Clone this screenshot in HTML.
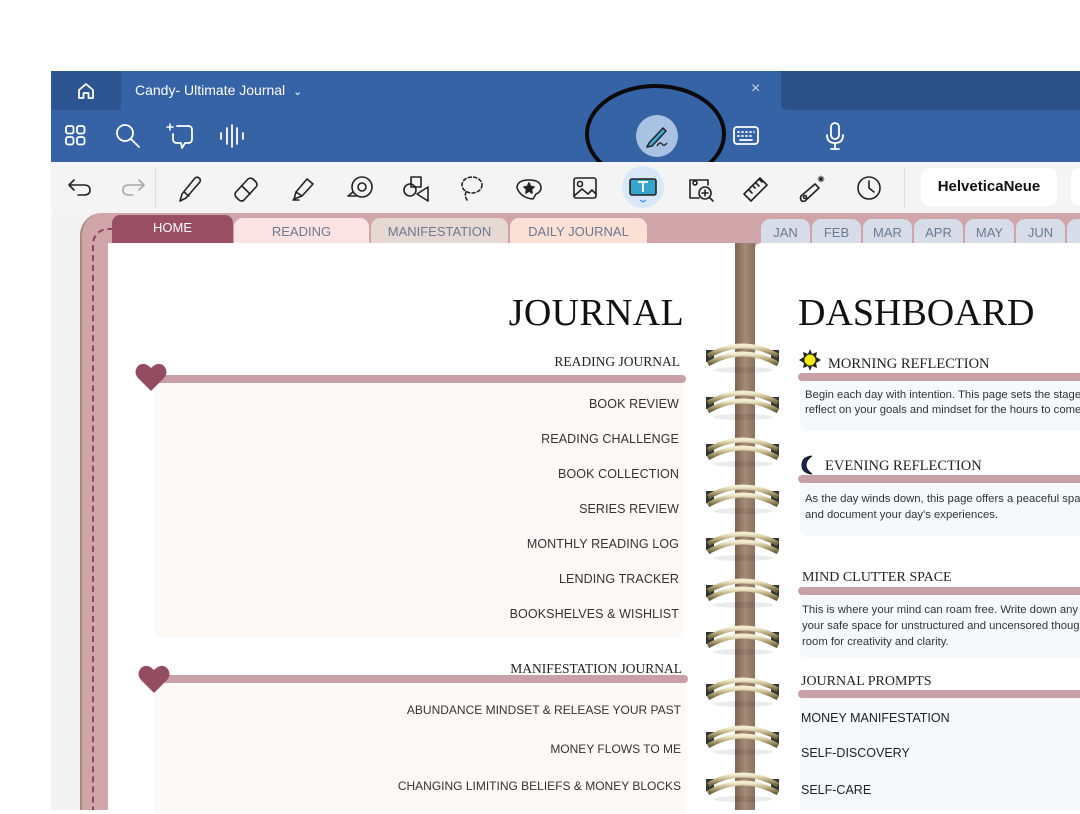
<!DOCTYPE html>
<html><head><meta charset="utf-8"><style>
*{margin:0;padding:0;box-sizing:border-box}
body{width:1080px;height:810px;overflow:hidden;background:#fff;position:relative;font-family:"Liberation Sans",sans-serif}
.a{position:absolute}
.ser{font-family:"Liberation Serif",serif}
.r{right:0;text-align:right;color:#333;font-size:12.5px;letter-spacing:.1px}
.r2{right:0;text-align:right;color:#333;font-size:12px;letter-spacing:0}
.ic{stroke:#222;fill:none;stroke-width:1.6;stroke-linecap:round;stroke-linejoin:round}
.wi{stroke:#fff;fill:none;stroke-width:1.8;stroke-linecap:round;stroke-linejoin:round}
.mt{top:219px;width:49px;height:26px;background:#d6dde9;border-radius:9px 9px 0 0;color:#6e7891;font-size:13px;text-align:center;line-height:28px}
</style></head><body>
<div class="a" style="left:51px;top:71px;width:1029px;height:91px;background:#3563a5"></div>
<div class="a" style="left:51px;top:71px;width:70px;height:39px;background:#2c5592"></div>
<div class="a" style="left:781px;top:71px;width:299px;height:39px;background:#2c5088;border-radius:0 0 0 6px"></div>
<svg class="a" style="left:76px;top:81px" width="20" height="20" viewBox="0 0 20 20"><path class="wi" d="M3 9 L10 3 L17 9 V17 H12.5 V12 H7.5 V17 H3Z"/></svg>
<div class="a" style="left:135px;top:82px;color:#fff;font-size:14px">Candy- Ultimate Journal &nbsp;<span style="font-size:11px">⌄</span></div>
<div class="a" style="left:751px;top:80px;color:#c8d4ea;font-size:16px">×</div>
<svg class="a" style="left:64px;top:124px" width="24" height="24" viewBox="0 0 24 24"><g class="wi" stroke-width="1.7"><rect x="2" y="2" width="7.5" height="7.5" rx="2"/><rect x="13" y="2" width="7.5" height="7.5" rx="2"/><rect x="2" y="13" width="7.5" height="7.5" rx="2"/><rect x="13" y="13" width="7.5" height="7.5" rx="2"/></g></svg>
<svg class="a" style="left:114px;top:122px" width="28" height="28" viewBox="0 0 28 28"><g class="wi"><circle cx="11" cy="11" r="8"/><path d="M17 17 L25 25"/></g></svg>
<svg class="a" style="left:164px;top:121px" width="32" height="30" viewBox="0 0 32 30"><g class="wi"><path d="M13 5 H24 Q28 5 28 9 V18 Q28 22 24 22 H21 L18 27 L17 22 H13 Q9 22 9 18 V13"/><path d="M6 3 V9 M3 6 H9" stroke-width="1.5"/></g></svg>
<svg class="a" style="left:218px;top:123px" width="28" height="26" viewBox="0 0 28 26"><g class="wi"><path d="M3 10 V16 M9 5 V21 M14 2 V24 M19 5 V21 M25 10 V16"/></g></svg>
<div class="a" style="left:636px;top:115px;width:42px;height:42px;border-radius:50%;background:#a9c1e2"></div>
<svg class="a" style="left:640px;top:119px" width="34" height="34" viewBox="0 0 34 34"><path d="M9 24 L23 9 L26 12 L12 27 L7 28Z" fill="#3fa9d8" stroke="#222" stroke-width="1.5" stroke-linejoin="round"/><path d="M17 27 Q20 22 22 25 Q24 28 27 24" fill="none" stroke="#222" stroke-width="1.3"/></svg>
<svg class="a" style="left:732px;top:125px" width="28" height="22" viewBox="0 0 28 22"><g class="wi" stroke-width="1.5"><rect x="2" y="2" width="24" height="17" rx="3"/><path d="M6 7h1M10 7h1M14 7h1M18 7h1M22 7h0M6 11h1M10 11h1M14 11h1M18 11h1M8 15h12"/></g></svg>
<svg class="a" style="left:824px;top:121px" width="22" height="30" viewBox="0 0 22 30"><g class="wi"><rect x="7" y="2" width="8" height="16" rx="4"/><path d="M3 14 Q3 22 11 22 Q19 22 19 14 M11 22 V28 M7 28 H15"/></g></svg>
<div class="a" style="left:585px;top:84px;width:141px;height:100px;border:4px solid #0a0a0a;border-radius:50%"></div>
<div class="a" style="left:51px;top:162px;width:1029px;height:51px;background:#f4f4f4"></div>
<div class="a" style="left:155px;top:168px;width:1px;height:40px;background:#ddd"></div>
<div class="a" style="left:904px;top:168px;width:1px;height:40px;background:#ddd"></div>
<svg class="a" style="left:66px;top:175px" width="30" height="24" viewBox="0 0 30 24"><path class="ic" d="M8 5 L3 10 L8 15 M3 10 H18 Q24 10 24 15 Q24 20 18 20 H12"/></svg>
<svg class="a" style="left:118px;top:175px" width="30" height="24" viewBox="0 0 30 24"><path class="ic" style="stroke:#aaa" d="M21 5 L26 10 L21 15 M26 10 H11 Q5 10 5 15 Q5 20 11 20 H15"/></svg>
<svg class="a" style="left:174px;top:172px" width="32" height="32" viewBox="0 0 32 32"><path class="ic" d="M8 22 L21 6 Q24 4 26 7 Q27 9 25 11 L12 26 L6 29Z M10 20 L15 24"/></svg>
<svg class="a" style="left:230px;top:172px" width="32" height="32" viewBox="0 0 32 32"><path class="ic" d="M6 20 L18 7 Q21 5 24 8 L26 10 Q28 13 26 15 L14 28 Q12 30 9 28 L6 25 Q4 22 6 20Z M12 14 L20 22"/></svg>
<svg class="a" style="left:286px;top:172px" width="32" height="32" viewBox="0 0 32 32"><path class="ic" d="M10 20 L21 7 L27 12 L16 24 Z M10 20 L8 27 L16 24 M7 28 H13"/></svg>
<svg class="a" style="left:344px;top:172px" width="32" height="32" viewBox="0 0 32 32"><g class="ic"><circle cx="18" cy="15" r="10"/><circle cx="18" cy="15" r="4"/><path d="M9 20 L4 24 H12"/></g></svg>
<svg class="a" style="left:400px;top:172px" width="32" height="32" viewBox="0 0 32 32"><g class="ic"><circle cx="10" cy="18" r="6"/><rect x="11" y="5" width="10" height="10"/><path d="M17 22 L28 15 V29Z"/></g></svg>
<svg class="a" style="left:456px;top:172px" width="32" height="32" viewBox="0 0 32 32"><g class="ic" stroke-dasharray="3 2.5"><ellipse cx="16" cy="13" rx="10" ry="8"/><path d="M10 20 Q8 25 12 29"/></g></svg>
<svg class="a" style="left:513px;top:172px" width="32" height="32" viewBox="0 0 32 32"><g class="ic"><path d="M4 16 Q4 8 16 8 Q28 8 28 16 Q28 20 23 22 L20 27 Q8 26 4 16Z"/><path d="M16 11 L17.5 14.5 L21 15 L18.5 17 L19 21 L16 19 L13 21 L13.5 17 L11 15 L14.5 14.5Z" fill="#222"/></g></svg>
<svg class="a" style="left:570px;top:172px" width="32" height="32" viewBox="0 0 32 32"><g class="ic"><rect x="4" y="6" width="22" height="20" rx="2"/><circle cx="10" cy="12" r="2.5"/><path d="M4 24 L12 17 L18 22 L22 18 L26 22"/></g></svg>
<div class="a" style="left:622px;top:166px;width:42px;height:42px;border-radius:50%;background:#d9e8f8"></div>
<svg class="a" style="left:627px;top:173px" width="32" height="32" viewBox="0 0 32 32"><rect x="3" y="6" width="26" height="16" rx="2" fill="#39a3c9" stroke="#222" stroke-width="1.6"/><path d="M11 9 H21 M16 9 V19" stroke="#fff" stroke-width="1.8"/><path d="M13 27 L16 29 L19 27" stroke="#3a8ee8" fill="none" stroke-width="1.2"/></svg>
<svg class="a" style="left:685px;top:172px" width="32" height="32" viewBox="0 0 32 32"><g class="ic"><path d="M14 26 H5 V8 H23 V13"/><circle cx="10" cy="11" r="2"/><circle cx="20" cy="21" r="6"/><path d="M17 21 H23 M20 18 V24 M25 26 L28 29"/></g></svg>
<svg class="a" style="left:740px;top:172px" width="32" height="32" viewBox="0 0 32 32"><g class="ic"><path d="M4 22 L20 6 L27 13 L11 29Z M9 18 L12 21 M13 14 L15 16 M16 11 L19 14 M20 8 L22 10"/></g></svg>
<svg class="a" style="left:797px;top:172px" width="32" height="32" viewBox="0 0 32 32"><g class="ic"><path d="M4 24 L18 12 L22 16 L8 29 Q5 30 4 28 Q3 26 4 24Z"/><circle cx="8" cy="25" r="1.5"/><path d="M24 4 V10 M21 7 H27 M22 5 L26 9 M26 5 L22 9" stroke-width="1"/></g></svg>
<svg class="a" style="left:853px;top:172px" width="32" height="32" viewBox="0 0 32 32"><g class="ic"><circle cx="16" cy="16" r="11"/><path d="M16 9 V16 L21 20"/></g></svg>
<div class="a" style="left:921px;top:168px;width:136px;height:38px;background:#fff;border-radius:8px;font-weight:bold;font-size:15px;text-align:center;line-height:38px;color:#111">HelveticaNeue</div>
<div class="a" style="left:1071px;top:168px;width:20px;height:38px;background:#fff;border-radius:8px"></div>
<div class="a" style="left:51px;top:213px;width:1029px;height:597px;background:#f3f3f3"></div>
<div class="a" style="left:80px;top:213px;width:670px;height:597px;background:#cfa5aa;border-radius:22px 0 0 0;border-left:2px solid #a88a82"></div>
<div class="a" style="left:92px;top:228px;width:20px;height:582px;border-left:2px dashed #8e4658;border-top:2px dashed #8e4658;border-radius:16px 0 0 0"></div>
<div class="a" style="left:750px;top:213px;width:330px;height:597px;background:#cfa5aa"></div>
<div class="a" style="left:112px;top:215px;width:121px;height:30px;background:#9a4e63;border-radius:8px 8px 0 0;color:#fff;font-size:13px;text-align:center;line-height:26px">HOME</div>
<div class="a" style="left:234px;top:218px;width:135px;height:27px;background:#fce3e3;border-radius:9px 9px 0 0;color:#6e7891;font-size:13px;text-align:center;line-height:28px">READING</div>
<div class="a" style="left:371px;top:218px;width:137px;height:27px;background:#e6d9d3;border-radius:9px 9px 0 0;color:#6e7891;font-size:13px;text-align:center;line-height:28px">MANIFESTATION</div>
<div class="a" style="left:510px;top:218px;width:137px;height:27px;background:#fbe0d6;border-radius:9px 9px 0 0;color:#6e7891;font-size:13px;text-align:center;line-height:28px">DAILY JOURNAL</div>
<div class="a mt" style="left:761px">JAN</div><div class="a mt" style="left:812px">FEB</div><div class="a mt" style="left:863px">MAR</div><div class="a mt" style="left:914px">APR</div><div class="a mt" style="left:965px">MAY</div><div class="a mt" style="left:1016px">JUN</div><div class="a mt" style="left:1067px">JUL</div>
<div class="a" style="left:108px;top:243px;width:630px;height:567px;background:#fff">
 <div class="a ser" style="right:54px;top:48px;font-size:38px;color:#111;letter-spacing:.3px">JOURNAL</div>
 <div class="a ser" style="right:58px;top:111px;font-size:13.5px;color:#222">READING JOURNAL</div>
 <div class="a" style="left:45px;top:132px;width:533px;height:8px;background:#c9a0a7;border-radius:4px"></div>
 <div class="a" style="left:47px;top:140px;width:529px;height:255px;background:#fdf9f6;border-radius:0 0 8px 8px"></div>
 <div class="a" style="left:47px;top:441px;width:531px;height:130px;background:#fdf9f6"></div>
 <div class="a" style="left:45px;top:432px;width:535px;height:8px;background:#c9a0a7;border-radius:4px"></div>
 <div class="a ser" style="right:56px;top:418px;font-size:13.5px;color:#222">MANIFESTATION JOURNAL</div>
</div>
<svg class="a" style="left:134px;top:361px" width="34" height="32" viewBox="0 0 34 32"><path d="M17 30 L4 17 Q-1 11 4 5 Q10 0 17 7 Q24 0 30 5 Q35 11 30 17Z" fill="#944c60"/></svg>
<svg class="a" style="left:137px;top:663px" width="34" height="32" viewBox="0 0 34 32"><path d="M17 30 L4 17 Q-1 11 4 5 Q10 0 17 7 Q24 0 30 5 Q35 11 30 17Z" fill="#944c60"/></svg>
<div class="a" style="left:108px;top:0;width:571px;height:810px">
 <div class="a r" style="top:397px">BOOK REVIEW</div>
 <div class="a r" style="top:432px">READING CHALLENGE</div>
 <div class="a r" style="top:467px">BOOK COLLECTION</div>
 <div class="a r" style="top:502px">SERIES REVIEW</div>
 <div class="a r" style="top:537px">MONTHLY READING LOG</div>
 <div class="a r" style="top:572px">LENDING TRACKER</div>
 <div class="a r" style="top:607px">BOOKSHELVES &amp; WISHLIST</div>
</div>
<div class="a" style="left:108px;top:0;width:573px;height:810px">
 <div class="a r2" style="top:703px">ABUNDANCE MINDSET &amp; RELEASE YOUR PAST</div>
 <div class="a r2" style="top:742px">MONEY FLOWS TO ME</div>
 <div class="a r2" style="top:779px">CHANGING LIMITING BELIEFS &amp; MONEY BLOCKS</div>
</div>
<div class="a" style="left:735px;top:243px;width:20px;height:567px;background:linear-gradient(90deg,#7c6454,#a58b77,#8a7160)"></div>
<div class="a" style="left:755px;top:243px;width:325px;height:567px;background:#fff;border-radius:6px 0 0 0">
 <div class="a ser" style="left:43px;top:48px;font-size:38px;color:#111">DASHBOARD</div>
 <svg class="a" style="left:43px;top:105px" width="24" height="24" viewBox="0 0 24 24"><path d="M12 1 L14 6 L19 4 L18 9 L23 12 L18 15 L19 20 L14 18 L12 23 L10 18 L5 20 L6 15 L1 12 L6 9 L5 4 L10 6Z" fill="#222"/><circle cx="12" cy="12" r="5.5" fill="#f4ee10"/></svg>
 <div class="a ser" style="left:73px;top:113px;font-size:14.5px;color:#222">MORNING REFLECTION</div>
 <div class="a" style="left:43px;top:130px;width:290px;height:8px;background:#c9a0a7;border-radius:4px"></div>
 <div class="a" style="left:45px;top:138px;width:290px;height:50px;background:#f6f8fc;border-radius:0 0 8px 8px"></div>
 <div class="a" style="left:50px;top:145px;font-size:11.3px;color:#333;line-height:15px;white-space:nowrap">Begin each day with intention. This page sets the stage<br>reflect on your goals and mindset for the hours to come</div>
 <svg class="a" style="left:43px;top:211px" width="20" height="22" viewBox="0 0 20 22"><path d="M14 2 Q4 3 4 11 Q4 19 14 20 Q8 16 8 11 Q8 6 14 2Z" fill="#1c2460" stroke="#111" stroke-width="1"/></svg>
 <div class="a ser" style="left:70px;top:215px;font-size:14.5px;color:#222">EVENING REFLECTION</div>
 <div class="a" style="left:43px;top:232px;width:290px;height:8px;background:#c9a0a7;border-radius:4px"></div>
 <div class="a" style="left:45px;top:240px;width:290px;height:53px;background:#f6f8fc;border-radius:0 0 8px 8px"></div>
 <div class="a" style="left:50px;top:248px;font-size:11.3px;color:#333;line-height:16px;white-space:nowrap">As the day winds down, this page offers a peaceful spa<br>and document your day's experiences.</div>
 <div class="a ser" style="left:47px;top:327px;font-size:14px;color:#222">MIND CLUTTER SPACE</div>
 <div class="a" style="left:43px;top:344px;width:290px;height:8px;background:#c9a0a7;border-radius:4px"></div>
 <div class="a" style="left:45px;top:352px;width:290px;height:63px;background:#f6f8fc;border-radius:0 0 8px 8px"></div>
 <div class="a" style="left:47px;top:359px;font-size:11.3px;color:#333;line-height:16px;white-space:nowrap">This is where your mind can roam free. Write down any<br>your safe space for unstructured and uncensored thoug<br>room for creativity and clarity.</div>
 <div class="a ser" style="left:46px;top:431px;font-size:14px;color:#222">JOURNAL PROMPTS</div>
 <div class="a" style="left:43px;top:447px;width:290px;height:8px;background:#c9a0a7;border-radius:4px"></div>
 <div class="a" style="left:45px;top:455px;width:290px;height:112px;background:#f6f8fc"></div>
 <div class="a" style="left:46px;top:468px;font-size:12.5px;color:#222">MONEY MANIFESTATION</div>
 <div class="a" style="left:46px;top:503px;font-size:12.5px;color:#222">SELF-DISCOVERY</div>
 <div class="a" style="left:46px;top:540px;font-size:12.5px;color:#222">SELF-CARE</div>
</div>
<svg width="0" height="0" style="position:absolute"><defs><linearGradient id="g" x1="0" y1="0" x2="0" y2="1"><stop offset="0" stop-color="#f1ecd0"/><stop offset=".5" stop-color="#b9ab7c"/><stop offset="1" stop-color="#6d6240"/></linearGradient></defs></svg>
<svg class="a" style="left:703px;top:340px" width="80" height="470" viewBox="0 0 80 470">
<g id="rg">
<rect x="3" y="10" width="8" height="12" fill="#333"/><rect x="68" y="10" width="8" height="12" fill="#333"/>
<path d="M5 16 Q40 -4 75 16" stroke="url(#g)" stroke-width="5" fill="none"/>
<path d="M5 24 Q40 4 75 24" stroke="url(#g)" stroke-width="5" fill="none"/>
<ellipse cx="40" cy="30" rx="30" ry="3" fill="#000" opacity=".08"/>
</g>
<use href="#rg" y="47"/><use href="#rg" y="94"/><use href="#rg" y="141"/><use href="#rg" y="188"/><use href="#rg" y="235"/><use href="#rg" y="282"/><use href="#rg" y="334"/><use href="#rg" y="382"/><use href="#rg" y="429"/>
</svg>
</body></html>
